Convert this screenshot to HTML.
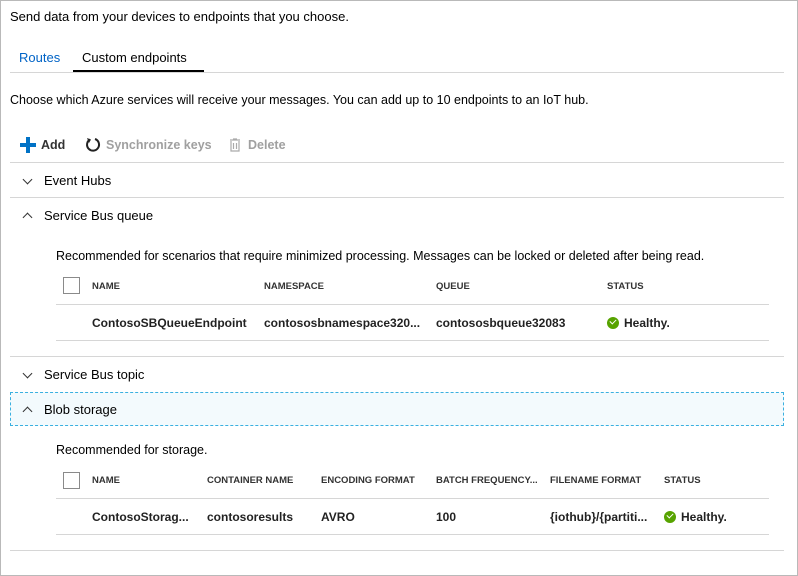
<!DOCTYPE html><html><head><style>
body{margin:0;width:798px;height:576px;position:relative;overflow:hidden;background:#fff;font-family:"Liberation Sans",sans-serif;font-size:13px;color:#000}
.o{position:absolute;left:0;top:0;width:796px;height:574px;border:1px solid #b9b9b9}
.t{position:absolute;white-space:nowrap;line-height:16px}
.l{position:absolute;height:1px;background:#d6d6d6}
.h{font-size:9.5px;font-weight:bold;color:#333}
.b{font-weight:bold;font-size:12px;color:#222}
.cb{position:absolute;width:15px;height:15px;border:1px solid #8a8a8a}
.ok{display:inline-block;width:12px;height:12px;border-radius:50%;background:#57a300;vertical-align:-2px;margin-right:5px;position:relative}
.ok:after{content:"";position:absolute;left:3px;top:2px;width:5px;height:3px;border-left:1.6px solid #fff;border-bottom:1.6px solid #fff;transform:rotate(-45deg)}
.ch{position:absolute;width:6px;height:6px;border-right:1.3px solid #333;border-bottom:1.3px solid #333}
.dn{transform:rotate(45deg)}.up{transform:rotate(-135deg)}
</style></head><body><div class="o"></div>
<div class="t" style="left:10px;top:9px">Send data from your devices to endpoints that you choose.</div>
<div class="t" style="left:19px;top:50px;color:#0063c6">Routes</div>
<div class="t" style="left:82px;top:50px">Custom endpoints</div>
<div class="l" style="left:10px;top:72px;width:774px"></div>
<div style="position:absolute;left:73px;top:70px;width:131px;height:2px;background:#000"></div>
<div class="t" style="left:10px;top:92px;font-size:12.5px">Choose which Azure services will receive your messages. You can add up to 10 endpoints to an IoT hub.</div>
<div style="position:absolute;left:20px;top:143px;width:16px;height:4px;background:#0072c6"></div>
<div style="position:absolute;left:26px;top:137px;width:4px;height:16px;background:#0072c6"></div>
<div class="t" style="left:41px;top:137px;font-weight:bold;color:#333;font-size:12.5px">Add</div>
<svg style="position:absolute;left:84px;top:136px" width="18" height="18" viewBox="0 0 18 18"><path d="M6 3.5A6 6 0 1 0 11 3" fill="none" stroke="#222" stroke-width="2"/><path d="M3 2l4 1.5-2 3.5z" fill="#222"/></svg>
<div class="t" style="left:106px;top:137px;font-weight:bold;color:#a0a0a0;font-size:12.5px">Synchronize keys</div>
<svg style="position:absolute;left:229px;top:138px" width="12" height="14"><path d="M1 2h10M4 1h4M2 3v10h8V3M4.5 5v6M7.5 5v6" fill="none" stroke="#aaa" stroke-width="1.2"/></svg>
<div class="t" style="left:248px;top:137px;font-weight:bold;color:#a0a0a0;font-size:12.5px">Delete</div>
<div class="l" style="left:10px;top:162px;width:774px"></div>
<div class="ch dn" style="left:24px;top:176px"></div>
<div class="t" style="left:44px;top:173px">Event Hubs</div>
<div class="l" style="left:10px;top:197px;width:774px"></div>
<div class="ch up" style="left:24px;top:214px"></div>
<div class="t" style="left:44px;top:208px">Service Bus queue</div>
<div class="t" style="left:56px;top:248px;font-size:12.5px">Recommended for scenarios that require minimized processing. Messages can be locked or deleted after being read.</div>
<div class="cb" style="left:63px;top:277px"></div>
<div class="t h" style="left:92px;top:279px">NAME</div>
<div class="t h" style="left:264px;top:279px">NAMESPACE</div>
<div class="t h" style="left:436px;top:279px">QUEUE</div>
<div class="t h" style="left:607px;top:279px">STATUS</div>
<div class="l" style="left:56px;top:304px;width:713px"></div>
<div class="t b" style="left:92px;top:315px">ContosoSBQueueEndpoint</div>
<div class="t b" style="left:264px;top:315px">contososbnamespace320...</div>
<div class="t b" style="left:436px;top:315px">contososbqueue32083</div>
<div class="t b" style="left:607px;top:315px"><span class="ok"></span>Healthy.</div>
<div class="l" style="left:56px;top:340px;width:713px"></div>
<div class="l" style="left:10px;top:356px;width:774px"></div>
<div class="ch dn" style="left:24px;top:370px"></div>
<div class="t" style="left:44px;top:367px">Service Bus topic</div>
<div style="position:absolute;left:10px;top:392px;width:772px;height:32px;border:1px dashed #3ab0e0;background:#f3fafd"></div>
<div class="ch up" style="left:24px;top:408px"></div>
<div class="t" style="left:44px;top:402px">Blob storage</div>
<div class="t" style="left:56px;top:442px;font-size:12.5px">Recommended for storage.</div>
<div class="cb" style="left:63px;top:472px"></div>
<div class="t h" style="left:92px;top:473px">NAME</div>
<div class="t h" style="left:207px;top:473px">CONTAINER NAME</div>
<div class="t h" style="left:321px;top:473px">ENCODING FORMAT</div>
<div class="t h" style="left:436px;top:473px">BATCH FREQUENCY...</div>
<div class="t h" style="left:550px;top:473px">FILENAME FORMAT</div>
<div class="t h" style="left:664px;top:473px">STATUS</div>
<div class="l" style="left:56px;top:498px;width:713px"></div>
<div class="t b" style="left:92px;top:509px">ContosoStorag...</div>
<div class="t b" style="left:207px;top:509px">contosoresults</div>
<div class="t b" style="left:321px;top:509px">AVRO</div>
<div class="t b" style="left:436px;top:509px">100</div>
<div class="t b" style="left:550px;top:509px">{iothub}/{partiti...</div>
<div class="t b" style="left:664px;top:509px"><span class="ok"></span>Healthy.</div>
<div class="l" style="left:56px;top:534px;width:713px"></div>
<div class="l" style="left:10px;top:550px;width:774px"></div>
</body></html>
